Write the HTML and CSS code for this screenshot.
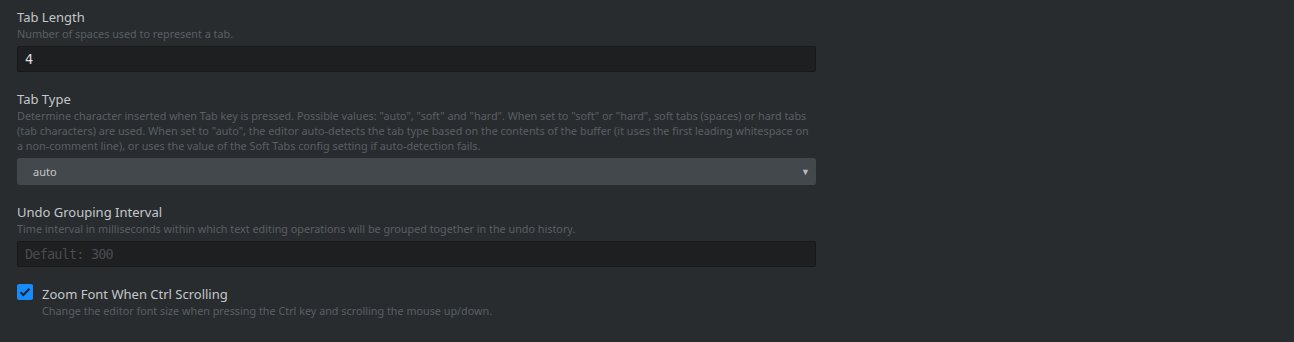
FILE: index.html
```html
<!DOCTYPE html>
<html lang="en">
<head>
    <meta charset="UTF-8">
    <title>Settings | Editor</title>
    <link rel="stylesheet" href="styles.css">
</head>
<body>
    <div class="settings-panel">
        <div class="control-group">
            <div class="setting-title">Tab Length</div>
            <div class="setting-description">Number of spaces used to represent a tab.</div>
            <input type="text" class="editor-input" value="4">
        </div>

        <div class="control-group">
            <div class="setting-title">Tab Type</div>
            <div class="setting-description">Determine character inserted when Tab key is pressed. Possible values: "auto", "soft" and "hard". When set to "soft" or "hard", soft tabs (spaces) or hard tabs (tab characters) are used. When set to "auto", the editor auto-detects the tab type based on the contents of the buffer (it uses the first leading whitespace on a non-comment line), or uses the value of the Soft Tabs config setting if auto-detection fails.</div>
            <div class="select-box">
                <span>auto</span>
                <span class="select-arrow">&#9660;</span>
            </div>
        </div>

        <div class="control-group">
            <div class="setting-title">Undo Grouping Interval</div>
            <div class="setting-description">Time interval in milliseconds within which text editing operations will be grouped together in the undo history.</div>
            <input type="text" class="editor-input" placeholder="Default: 300">
        </div>

        <div class="control-group checkbox-group">
            <span class="checkbox">
                <svg width="12" height="10" viewBox="0 0 12 10">
                    <path d="M1.5 5.2 L4.4 8 L10.5 1.8" fill="none" stroke="#1c2633" stroke-width="2.2"/>
                </svg>
            </span>
            <div>
                <div class="setting-title">Zoom Font When Ctrl Scrolling</div>
                <div class="setting-description">Change the editor font size when pressing the Ctrl key and scrolling the mouse up/down.</div>
            </div>
        </div>
    </div>
</body>
</html>
```

FILE: styles.css
```css
:root {
    --background: #282c2f;
    --input-bg: #1e1f21;
    --input-border: #18191b;
    --select-bg: #43484c;
    --text: #c5c7c9;
    --text-subtle: #5b5f63;
    --accent: #178bfb;
}

* {
    margin: 0;
    padding: 0;
    box-sizing: border-box;
}

body {
    background: var(--background);
    font-family: "Noto Sans", sans-serif;
    color: var(--text);
}

.settings-panel {
    width: 816px;
    padding: 8px 0 0 17px;
}

.control-group {
    margin-bottom: 18px;
}

.setting-title {
    font-size: 13px;
    line-height: 18px;
    color: var(--text);
}

.setting-description {
    font-size: 10.8px;
    line-height: 15px;
    color: var(--text-subtle);
}

.editor-input {
    display: block;
    width: 100%;
    height: 26px;
    margin-top: 5px;
    padding: 0 7px;
    background: var(--input-bg);
    border: 1px solid var(--input-border);
    border-radius: 2px;
    font-family: "DejaVu Sans Mono", monospace;
    font-size: 13.5px;
    letter-spacing: -0.8px;
    color: #dcdcdc;
    outline: none;
}

.editor-input::placeholder {
    color: #484c50;
}

.select-box {
    display: flex;
    align-items: center;
    justify-content: space-between;
    height: 27px;
    margin-top: 5px;
    padding: 0 6px 0 16px;
    background: var(--select-bg);
    border-radius: 3px;
    font-size: 11px;
    color: var(--text);
}

.select-arrow {
    font-size: 9px;
    color: #b8bbbe;
}

.checkbox-group {
    display: flex;
    gap: 9px;
}

.checkbox {
    display: flex;
    align-items: center;
    justify-content: center;
    width: 16px;
    height: 16px;
    margin-top: -1px;
    background: var(--accent);
    border-radius: 2px;
    flex-shrink: 0;
}
```
